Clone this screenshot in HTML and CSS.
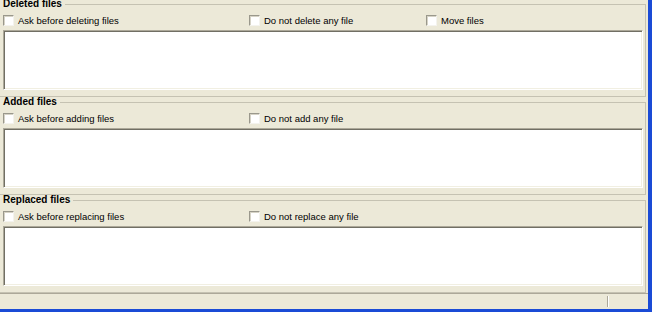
FILE: index.html
```html
<!DOCTYPE html>
<html>
<head>
<meta charset="utf-8">
<title>Files</title>
<link rel="stylesheet" href="styles.css">
</head>
<body>
<div class="window">
  <div class="client">
    <fieldset class="group">
      <legend>Deleted files</legend>
      <div class="options">
        <label class="check"><span class="box"></span>Ask before deleting files</label>
        <label class="check"><span class="box"></span>Do not delete any file</label>
        <label class="check"><span class="box"></span>Move files</label>
      </div>
      <div class="listbox"></div>
    </fieldset>
    <fieldset class="group">
      <legend>Added files</legend>
      <div class="options">
        <label class="check"><span class="box"></span>Ask before adding files</label>
        <label class="check"><span class="box"></span>Do not add any file</label>
      </div>
      <div class="listbox"></div>
    </fieldset>
    <fieldset class="group">
      <legend>Replaced files</legend>
      <div class="options">
        <label class="check"><span class="box"></span>Ask before replacing files</label>
        <label class="check"><span class="box"></span>Do not replace any file</label>
      </div>
      <div class="listbox"></div>
    </fieldset>
    <div class="statusbar">
      <div class="panel panel-main"></div>
      <div class="panel panel-side"></div>
    </div>
  </div>
</div>
</body>
</html>
```

FILE: styles.css
```css
html, body {
  margin: 0;
  padding: 0;
}

body {
  width: 652px;
  height: 312px;
  overflow: hidden;
  background: #ECE9D8;
  font-family: "Liberation Sans", Arial, sans-serif;
  font-size: 9.5px;
  color: #000;
}

.window {
  display: flex;
  flex-direction: column;
  width: 648px;
  height: 309px;
  border-right: 4px solid #1A4BD6;
  border-bottom: 3px solid #1A4BD6;
  background: #ECE9D8;
  overflow: hidden;
}

.client {
  display: flex;
  flex-direction: column;
  flex: 1;
  min-height: 0;
}

.group {
  box-sizing: border-box;
  width: 652px;
  min-width: 0;
  margin: 0 0 0 -6px;
  padding: 5px 2px 6px 8px;
  border: 1px solid #C5C2B2;
  flex: none;
}

.group:first-child {
  margin-top: -1px;
}

.group legend {
  font-weight: bold;
  font-size: 10px;
  line-height: 10px;
  padding: 0 3px;
  margin-left: -3px;
}

.options {
  display: grid;
  grid-template-columns: 246px 177px 1fr;
  height: 13px;
  align-items: center;
}

.check {
  display: flex;
  align-items: center;
  gap: 4px;
  line-height: 13px;
  white-space: nowrap;
}

.box {
  box-sizing: border-box;
  width: 11px;
  height: 11px;
  flex: none;
  background: #fff;
  border: 1px solid;
  border-color: #9A988C #F4F3EE #F4F3EE #9A988C;
  box-shadow: inset 1px 1px 0 #D6D3C6;
}

.listbox {
  box-sizing: border-box;
  width: 640px;
  height: 60px;
  margin-top: 3px;
  background: #fff;
  border: 1px solid;
  border-color: #ACA899 #fff #fff #ACA899;
  box-shadow: inset 1px 1px 0 #716F64, inset -1px -1px 0 #F1EFE2;
}

.statusbar {
  display: flex;
  flex: 1;
  border-top: 1px solid #ACA899;
}

.panel {
  box-sizing: border-box;
  margin: 2px 0 2px 0;
}

.panel-main {
  flex: 1;
  border-right: 1px solid #ACA899;
}

.panel-side {
  width: 40px;
  border-left: 1px solid #fff;
}
```
